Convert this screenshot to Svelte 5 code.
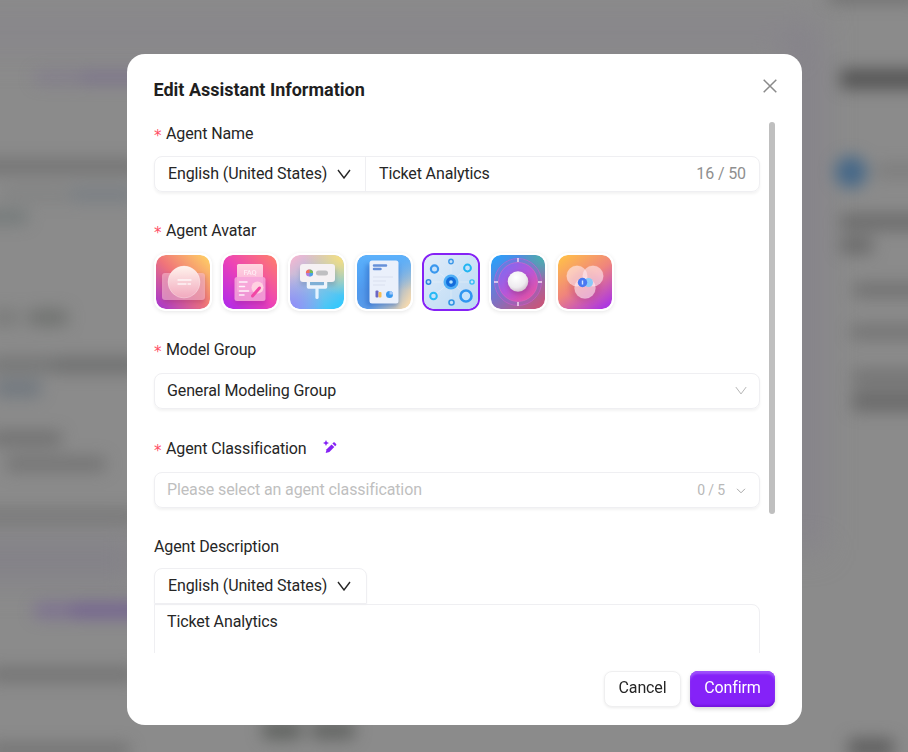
<script>
  let agentName = "Ticket Analytics";
  let description = "Ticket Analytics";
  let language = "English (United States)";
  let selected = "network";

  const avatars = ["chat", "faq", "plugin", "report", "network", "target", "venn"];

  // blurred page behind the mask: x, y, width, height, colour, opacity
  const smudges = [
    [34, 71, 45, 13, "#76688f", 0.38],
    [79, 71, 70, 13, "#6f608c", 0.52],
    [-20, 159, 160, 15, "#5d5d5d", 0.5],
    [0, 187, 70, 15, "#6c6f70", 0.25],
    [70, 187, 65, 15, "#5f6c78", 0.38],
    [-20, 210, 48, 14, "#5a6666", 0.46],
    [-10, 309, 30, 17, "#616462", 0.36],
    [28, 309, 40, 17, "#5c605d", 0.55],
    [-10, 357, 60, 16, "#5e6060", 0.46],
    [50, 357, 90, 16, "#595b5b", 0.55],
    [-5, 380, 46, 17, "#556474", 0.48],
    [-10, 431, 72, 15, "#5b5b5b", 0.52],
    [6, 456, 100, 16, "#5e5e5e", 0.48],
    [-20, 509, 160, 15, "#666666", 0.48],
    [34, 603, 35, 15, "#6e5598", 0.48],
    [69, 603, 80, 15, "#654b94", 0.62],
    [-10, 667, 145, 15, "#5a5a5a", 0.48],
    [-10, 743, 140, 14, "#5a5a5a", 0.48],
    [262, 722, 40, 17, "#4b4f4b", 0.68],
    [311, 722, 44, 17, "#4b4f4b", 0.64],
    [840, 69, 90, 20, "#484848", 0.8],
    [875, 163, 50, 15, "#626262", 0.32],
    [840, 214, 90, 16, "#525252", 0.54],
    [840, 237, 33, 17, "#525252", 0.54],
    [853, 283, 80, 14, "#545454", 0.48],
    [850, 325, 80, 14, "#545454", 0.42],
    [852, 369, 80, 16, "#555555", 0.42],
    [852, 390, 80, 22, "#505050", 0.52],
    [848, 738, 46, 20, "#4c4c4c", 0.66],
    [828, -10, 90, 13, "#555555", 0.5],
  ];
</script>

{#snippet chevron(cls)}
  <svg class="chevron {cls}" viewBox="0 0 14 10" fill="none">
    <path d="M1 1l6 8 6-8" stroke="currentColor" />
  </svg>
{/snippet}

<div class="page">
  <svg class="backdrop" viewBox="0 0 908 752">
    <defs>
      <filter id="soft" filterUnits="userSpaceOnUse" x="-60" y="-60" width="1028" height="872" color-interpolation-filters="sRGB">
        <feGaussianBlur stdDeviation="8" />
      </filter>
      <filter id="wide" filterUnits="userSpaceOnUse" x="-100" y="-100" width="1108" height="952" color-interpolation-filters="sRGB">
        <feGaussianBlur stdDeviation="16" />
      </filter>
    </defs>
    <rect width="908" height="752" fill="#8b8b8b" />
    <g filter="url(#wide)">
      <rect x="-80" y="15" width="900" height="35" fill="#88868b" />
      <rect x="790" y="30" width="30" height="520" fill="#85828a" />
      <rect x="-80" y="540" width="220" height="40" fill="#838188" />
    </g>
    <g filter="url(#soft)">
      {#each smudges as [x, y, w, h, fill, opacity]}
        <rect {x} {y} width={w} height={h} {fill} {opacity} rx="5" />
      {/each}
      <circle cx="851" cy="172" r="16" fill="#426688" opacity=".95" />
    </g>
  </svg>

  <div class="modal">
    <header>
      <h2>Edit Assistant Information</h2>
      <button class="close" aria-label="Close">
        <svg viewBox="0 0 14 14"><path d="M.7.7l12.6 12.6M13.3.7L.7 13.3" /></svg>
      </button>
    </header>

    <div class="body">
      <div class="form">
        <section>
          <div class="label"><i class="req">*</i>Agent Name</div>
          <div class="box name">
            <div class="lang">{language}{@render chevron("dark")}</div>
            <div class="value">{agentName}</div>
            <span class="count">{agentName.length} / 50</span>
          </div>
        </section>

        <section>
          <div class="label"><i class="req">*</i>Agent Avatar</div>
          <div class="avatars">
            {#each avatars as avatar}
              <div class="avatar" class:active={avatar === selected}>
                {#if avatar === "chat"}
                  <svg viewBox="0 0 54 54">
                    <defs>
                      <linearGradient id="chat-bg" x1="0" y1="1" x2="1" y2="0">
                        <stop offset="0" stop-color="#a332d3" />
                        <stop offset=".5" stop-color="#f07579" />
                        <stop offset="1" stop-color="#ffd563" />
                      </linearGradient>
                      <linearGradient id="chat-c" x1="0" y1="0" x2="0" y2="1">
                        <stop offset="0" stop-color="#fff3ec" />
                        <stop offset="1" stop-color="#f1a9be" />
                      </linearGradient>
                    </defs>
                    <rect width="54" height="54" fill="url(#chat-bg)" />
                    <rect x="7" y="20" width="42" height="28" rx="4" fill="#8d2070" opacity=".3" filter="url(#blur2)" />
                    <rect x="6" y="18" width="43" height="27" rx="3" fill="#fbc5d6" opacity=".55" />
                    <circle cx="28" cy="27" r="16" fill="url(#chat-c)" stroke="#fff" stroke-opacity=".5" stroke-width=".6" />
                    <path d="M22 25h13M22 29h8M32 29h2.500" stroke="#fff" stroke-opacity=".8" stroke-width="1.300" stroke-linecap="round" />
                  </svg>
                {:else if avatar === "faq"}
                  <svg viewBox="0 0 54 54">
                    <defs>
                      <linearGradient id="faq-bg" x1="0" y1="1" x2="1" y2="0">
                        <stop offset="0" stop-color="#ac28ee" />
                        <stop offset=".5" stop-color="#ed43b6" />
                        <stop offset="1" stop-color="#ff8068" />
                      </linearGradient>
                      <linearGradient id="faq-c" x1="0" y1="0" x2="0" y2="1">
                        <stop offset="0" stop-color="#ffd5e0" />
                        <stop offset="1" stop-color="#f9a4d3" />
                      </linearGradient>
                    </defs>
                    <rect width="54" height="54" fill="url(#faq-bg)" />
                    <rect x="12" y="25" width="31" height="25" rx="3" fill="#9a2098" opacity=".35" filter="url(#blur2)" />
                    <rect x="14" y="9" width="26" height="28" rx="1.500" fill="url(#faq-c)" />
                    <text x="27" y="19.500" font-size="7.500" font-weight="500" text-anchor="middle" fill="#fff" opacity=".65">FAQ</text>
                    <rect x="11.500" y="22" width="31" height="24" rx="2.500" fill="#f6a5da" opacity=".88" />
                    <path d="M16.500 27h7.500M16.500 31.500h5M16.500 36h9M16.500 40h4.500" stroke="#fff" stroke-opacity=".85" stroke-width="1.500" stroke-linecap="round" />
                    <circle cx="34.500" cy="32.500" r="6" fill="#ffd1e1" />
                    <path d="M36.500 33l-7 8" stroke="#f246a5" stroke-width="3" stroke-linecap="round" />
                  </svg>
                {:else if avatar === "plugin"}
                  <svg viewBox="0 0 54 54">
                    <defs>
                      <linearGradient id="plug-bg" x1="0" y1="0" x2=".8" y2="1">
                        <stop offset="0" stop-color="#fcb7d0" />
                        <stop offset=".5" stop-color="#9dbfdf" />
                        <stop offset="1" stop-color="#38c8fb" />
                      </linearGradient>
                      <radialGradient id="plug-y" cx="1" cy="0" r=".75">
                        <stop offset="0" stop-color="#ffe277" />
                        <stop offset="1" stop-color="#ffe277" stop-opacity="0" />
                      </radialGradient>
                      <radialGradient id="plug-b" cx="0" cy="1" r=".65">
                        <stop offset="0" stop-color="#9189fa" />
                        <stop offset="1" stop-color="#9189fa" stop-opacity="0" />
                      </radialGradient>
                    </defs>
                    <rect width="54" height="54" fill="url(#plug-bg)" />
                    <rect width="54" height="54" fill="url(#plug-y)" />
                    <rect width="54" height="54" fill="url(#plug-b)" />
                    <rect x="10" y="13" width="36" height="18" rx="4" fill="#5773a0" opacity=".3" filter="url(#blur2)" />
                    <path d="M18.500 25v7h17v-7" fill="none" stroke="#eef4fb" stroke-width="3.500" stroke-linejoin="round" />
                    <path d="M27 33v9.500" stroke="#e3f3ff" stroke-width="3.200" stroke-linecap="round" />
                    <rect x="10" y="9" width="35" height="18" rx="3" fill="#f5f1f3" />
                    <rect x="20" y="27" width="14" height="3" fill="#7fb0d6" />
                    <circle cx="19.500" cy="18" r="3.600" fill="#b27ade" />
                    <path d="M19.500 18v-3.600a3.600 3.600 0 0 1 3.600 3.600z" fill="#73bd56" />
                    <path d="M19.500 18h-3.600a3.600 3.600 0 0 1 3.600-3.600z" fill="#f1705a" />
                    <path d="M19.500 18v3.600a3.600 3.600 0 0 0 3.600-3.600z" fill="#48a1e6" />
                    <rect x="26" y="15.500" width="12" height="5" rx="2.500" fill="#bfbfc1" />
                  </svg>
                {:else if avatar === "report"}
                  <svg viewBox="0 0 54 54">
                    <defs>
                      <linearGradient id="rep-bg" x1="0" y1=".2" x2="1" y2=".8">
                        <stop offset="0" stop-color="#489af2" />
                        <stop offset=".5" stop-color="#5b9ae7" />
                        <stop offset="1" stop-color="#f2d8b0" />
                      </linearGradient>
                      <linearGradient id="rep-top" x1="0" y1="0" x2="0" y2="1">
                        <stop offset="0" stop-color="#5cb1fb" />
                        <stop offset=".65" stop-color="#5cb1fb" stop-opacity="0" />
                      </linearGradient>
                    </defs>
                    <rect width="54" height="54" fill="url(#rep-bg)" />
                    <rect width="54" height="54" fill="url(#rep-top)" />
                    <rect x="9" y="9" width="32" height="42" rx="3" fill="#285ebe" opacity=".45" filter="url(#blur2)" />
                    <rect x="12.500" y="5.500" width="29" height="43" rx="2.500" fill="#eaf0fb" />
                    <path d="M17 10.500h12M17 14h6.500" stroke="#6690d9" stroke-width="2.500" stroke-linecap="round" />
                    <path d="M16 22h20M16 26h13M16 30h12" stroke="#d9e0f0" stroke-width="1.200" />
                    <rect x="18.500" y="35.500" width="3" height="7" rx="1" fill="#6c67c4" />
                    <rect x="21.500" y="37" width="3" height="5.500" rx="1" fill="#f6bd54" />
                    <circle cx="32.500" cy="39.500" r="3.500" fill="#3998ee" />
                    <path d="M32.500 39.500V36a3.500 3.500 0 0 1 3.500 3.500z" fill="#a5c9fa" />
                  </svg>
                {:else if avatar === "network"}
                  <svg viewBox="0 0 54 54">
                    <defs>
                      <linearGradient id="net-bg" x1="0" y1="0" x2="1" y2="1">
                        <stop offset="0" stop-color="#e0ecf9" />
                        <stop offset="1" stop-color="#bad9f4" />
                      </linearGradient>
                    </defs>
                    <rect width="54" height="54" fill="url(#net-bg)" />
                    <g fill="none" stroke="#f1f6fd" stroke-width="1" opacity=".4">
                      <path d="M27 27L10 14M27 27L43 13M27 27L9 41M27 27l15 13M27 7v40M5 27h43" />
                    </g>
                    <g fill="#c6e2fb">
                      <circle cx="10.500" cy="14" r="3.600" stroke="#3a98ee" stroke-width="2.200" />
                      <circle cx="27" cy="6.500" r="2.200" stroke="#3d98e8" stroke-width="1.400" />
                      <circle cx="43.500" cy="13" r="3.400" stroke="#22b5f2" stroke-width="2" />
                      <circle cx="4.500" cy="27" r="2.200" stroke="#3189dc" stroke-width="1.500" />
                      <circle cx="48" cy="27" r="2.100" stroke="#38bdf3" stroke-width="1.400" />
                      <circle cx="9.500" cy="41" r="3.300" stroke="#28b9f4" stroke-width="2" />
                      <circle cx="27.500" cy="47.500" r="2.500" stroke="#3495e2" stroke-width="1.600" />
                      <circle cx="42" cy="41" r="5.500" stroke="#3096f0" stroke-width="2.600" />
                    </g>
                    <circle cx="27" cy="27" r="7.500" fill="#4dadf5" />
                    <circle cx="27" cy="27" r="5" fill="#136ddc" />
                    <circle cx="27" cy="27" r="1.800" fill="#b5e2ff" />
                  </svg>
                {:else if avatar === "target"}
                  <svg viewBox="0 0 54 54">
                    <defs>
                      <linearGradient id="tar-bg" x1="0" y1="0" x2=".8" y2="1">
                        <stop offset="0" stop-color="#20a5ff" />
                        <stop offset=".5" stop-color="#7575cd" />
                        <stop offset="1" stop-color="#c5577d" />
                      </linearGradient>
                      <radialGradient id="tar-g" cx="1" cy="0" r=".5">
                        <stop offset="0" stop-color="#40b9a9" />
                        <stop offset="1" stop-color="#40b9a9" stop-opacity="0" />
                      </radialGradient>
                      <linearGradient id="tar-disc" x1="0" y1="0" x2=".9" y2="1">
                        <stop offset="0" stop-color="#736ff5" />
                        <stop offset=".5" stop-color="#b357db" />
                        <stop offset="1" stop-color="#ee529c" />
                      </linearGradient>
                      <radialGradient id="tar-ball" cx=".4" cy=".3" r=".75">
                        <stop offset="0" stop-color="#fff" />
                        <stop offset=".65" stop-color="#eeebef" />
                        <stop offset="1" stop-color="#cdb9ca" />
                      </radialGradient>
                    </defs>
                    <rect width="54" height="54" fill="url(#tar-bg)" />
                    <rect width="54" height="54" fill="url(#tar-g)" />
                    <circle cx="27" cy="27" r="23.500" fill="#a15ed7" fill-opacity=".3" stroke="#d65bd5" stroke-opacity=".55" stroke-width="1" />
                    <circle cx="27" cy="27" r="19.500" fill="url(#tar-disc)" stroke="#ef68c3" stroke-opacity=".6" stroke-width=".8" />
                    <path d="M27 3v4M27 47v4M3 27h4M47 27h4" stroke="#f5dcf1" stroke-width="1.500" />
                    <circle cx="28" cy="29" r="11" fill="#78205f" opacity=".3" filter="url(#blur2)" />
                    <circle cx="27" cy="26.500" r="10.300" fill="url(#tar-ball)" />
                  </svg>
                {:else}
                  <svg viewBox="0 0 54 54">
                    <defs>
                      <linearGradient id="venn-bg" x1=".1" y1="0" x2=".8" y2="1">
                        <stop offset="0" stop-color="#ffbf49" />
                        <stop offset=".5" stop-color="#f0857c" />
                        <stop offset="1" stop-color="#ae38df" />
                      </linearGradient>
                    </defs>
                    <rect width="54" height="54" fill="url(#venn-bg)" />
                    <circle cx="27" cy="31" r="16" fill="#9c2674" opacity=".18" filter="url(#blur2)" />
                    <g fill="#ffe9f1" fill-opacity=".62" stroke="#fff" stroke-opacity=".3" stroke-width=".5">
                      <circle cx="27" cy="33" r="10.500" />
                      <circle cx="19" cy="21" r="10.300" />
                      <circle cx="35" cy="21" r="10.300" />
                    </g>
                    <circle cx="30.500" cy="27.500" r="4.500" fill="#8ac9f8" />
                    <circle cx="24.500" cy="27.500" r="4.700" fill="#4878f2" />
                    <path d="M24.500 25.500v4" stroke="#d5e7ff" stroke-width="1.400" />
                  </svg>
                {/if}
              </div>
            {/each}
          </div>
        </section>

        <section class="model">
          <div class="label"><i class="req">*</i>Model Group</div>
          <div class="box">
            <div class="value">General Modeling Group</div>
            {@render chevron("light")}
          </div>
        </section>

        <section class="classification">
          <div class="label">
            <i class="req">*</i>Agent Classification
            <svg class="wand" viewBox="0 0 14 14">
              <path d="M3 0l.9 2.100L6 3l-2.100.9L3 6l-.9-2.100L0 3l2.100-.9z" />
              <path d="M8.600 4.400l2.700 2.700-4.900 4.900-3.700 1 .9-3.700z" />
              <path d="M9.400 3.600l1-1q.7-.5 1.300 0l1.400 1.400q.5.700 0 1.300l-1 1z" />
            </svg>
          </div>
          <div class="box">
            <div class="value placeholder">Please select an agent classification</div>
            <span class="count small">0 / 5</span>
            <svg class="caret" viewBox="0 0 10 6" fill="none"><path d="M1 .8l4 4 4-4" stroke="currentColor" /></svg>
          </div>
        </section>

        <section class="description">
          <div class="label">Agent Description</div>
          <div class="tab">{language}{@render chevron("dark")}</div>
          <div class="textarea">{description}</div>
        </section>
      </div>
      <div class="scrollbar"></div>
    </div>

    <footer>
      <button class="cancel">Cancel</button>
      <button class="confirm">Confirm</button>
    </footer>
  </div>

  <svg class="defs" width="0" height="0">
    <filter id="blur2" x="-30%" y="-30%" width="160%" height="160%">
      <feGaussianBlur stdDeviation="2" />
    </filter>
  </svg>
</div>

<style>
  :global(body) {
    margin: 0;
    background: #8b8b8b;
  }

  .page {
    position: relative;
    box-sizing: border-box;
    width: 908px;
    height: 752px;
    padding: 54px 106px 27px 127px;
    overflow: hidden;
    font-family: Roboto, "Liberation Sans", sans-serif;
    font-size: 16px;
    letter-spacing: -0.12px;
    color: #262626;
  }

  .page * {
    box-sizing: border-box;
  }

  .backdrop {
    position: absolute;
    left: 0;
    top: 0;
    width: 908px;
    height: 752px;
  }

  .defs {
    position: absolute;
  }

  .modal {
    position: relative;
    display: flex;
    flex-direction: column;
    height: 671px;
    background: #fff;
    border-radius: 18px;
  }

  header {
    display: flex;
    justify-content: space-between;
    height: 68px;
    padding: 24px 25px 0 26.5px;
  }

  h2 {
    margin: 0;
    font-size: 18px;
    line-height: 24px;
    font-weight: 700;
    letter-spacing: 0;
    color: #1f1f1f;
  }

  button {
    font-family: inherit;
    font-size: 16px;
    letter-spacing: inherit;
  }

  .close {
    width: 14px;
    height: 14px;
    padding: 0;
    margin-top: 1px;
    border: 0;
    background: none;
  }

  .close svg {
    display: block;
    stroke: #8a8a8a;
    stroke-width: 1.500;
  }

  .body {
    display: flex;
    height: 531px;
    padding-left: 27px;
    overflow: hidden;
  }

  .form {
    width: 606px;
    height: 531px;
  }

  .scrollbar {
    width: 6px;
    height: 392px;
    margin-left: 9px;
    border-radius: 3px;
    background: #bfbfbf;
  }

  section {
    margin-bottom: 27px;
  }

  .label {
    display: flex;
    align-items: center;
    height: 22px;
    padding-top: 2px;
    margin-bottom: 12px;
    line-height: 22px;
    color: #262626;
  }

  .req {
    width: 12px;
    height: 22px;
    font-family: "DejaVu Sans", sans-serif;
    font-size: 15px;
    font-style: normal;
    line-height: 27px;
    color: #ff4d64;
  }

  .box {
    display: flex;
    align-items: center;
    height: 36px;
    padding: 0 12px 1px;
    border: 1px solid #efeff2;
    border-radius: 8px;
    box-shadow: 0 2px 3px rgba(0, 0, 0, 0.05);
  }

  .value {
    flex: 1;
  }

  .name {
    padding-left: 0;
    padding-right: 13px;
  }

  .name .value {
    padding-left: 13px;
  }

  .lang {
    display: flex;
    align-items: center;
    width: 211px;
    height: 35px;
    padding-left: 13px;
    border-right: 1px solid #efeff2;
  }

  .chevron.dark {
    width: 14px;
    height: 10px;
    margin-left: 10px;
    color: #262626;
    stroke-width: 1.400;
  }

  .chevron.light {
    width: 12px;
    height: 9px;
    color: #a8a8a8;
  }

  .count {
    color: #8f8f8f;
  }

  .small {
    margin-right: 11px;
    font-size: 14px;
    color: #b8b8b8;
  }

  .caret {
    width: 10px;
    height: 6px;
    margin: 3px 1px 0 0;
    color: #a8a8a8;
  }

  .placeholder {
    color: #bfbfbf;
  }

  .avatars {
    display: flex;
    gap: 9px;
  }

  .avatar {
    width: 58px;
    height: 58px;
    border: 2px solid #fff;
    border-radius: 12px;
    box-shadow: 0 1px 4px rgba(0, 0, 0, 0.1);
    overflow: hidden;
  }

  .avatar svg {
    display: block;
    width: 54px;
    height: 54px;
    border-radius: 9px;
  }

  .avatar.active {
    border-color: #8522f5;
    box-shadow: none;
  }

  .model {
    margin-bottom: 28px;
  }

  .model .label,
  .classification .label {
    margin-bottom: 13px;
  }

  .wand {
    width: 14px;
    height: 14px;
    margin: -4px 0 0 16px;
    fill: #8522f5;
  }

  .description .label {
    margin-bottom: 11px;
  }

  .tab {
    display: flex;
    align-items: center;
    width: 213px;
    height: 36px;
    padding: 0 0 1px 13px;
    border: 1px solid #efeff2;
    border-radius: 8px 8px 0 0;
    box-shadow: 0 1px 2px rgba(0, 0, 0, 0.04);
  }

  .textarea {
    height: 90px;
    padding: 6px 12px;
    border: 1px solid #efeff2;
    border-radius: 0 8px 8px 8px;
    line-height: 22px;
  }

  footer {
    display: flex;
    justify-content: flex-end;
    gap: 9px;
    padding: 18px 27px 0;
  }

  .cancel,
  .confirm {
    height: 36px;
    padding: 0 0 4px;
    border-radius: 8px;
  }

  .cancel {
    width: 77px;
    border: 1px solid #efeff0;
    background: #fff;
    color: #262626;
    box-shadow: 0 1px 3px rgba(0, 0, 0, 0.08);
  }

  .confirm {
    width: 85px;
    border: 0;
    background: #8522f8;
    color: #fff;
    box-shadow:
      inset 0 3px 2px #9d50fb,
      inset 0 -2px 2px #7416df,
      0 2px 4px rgba(0, 0, 0, 0.16);
  }
</style>
